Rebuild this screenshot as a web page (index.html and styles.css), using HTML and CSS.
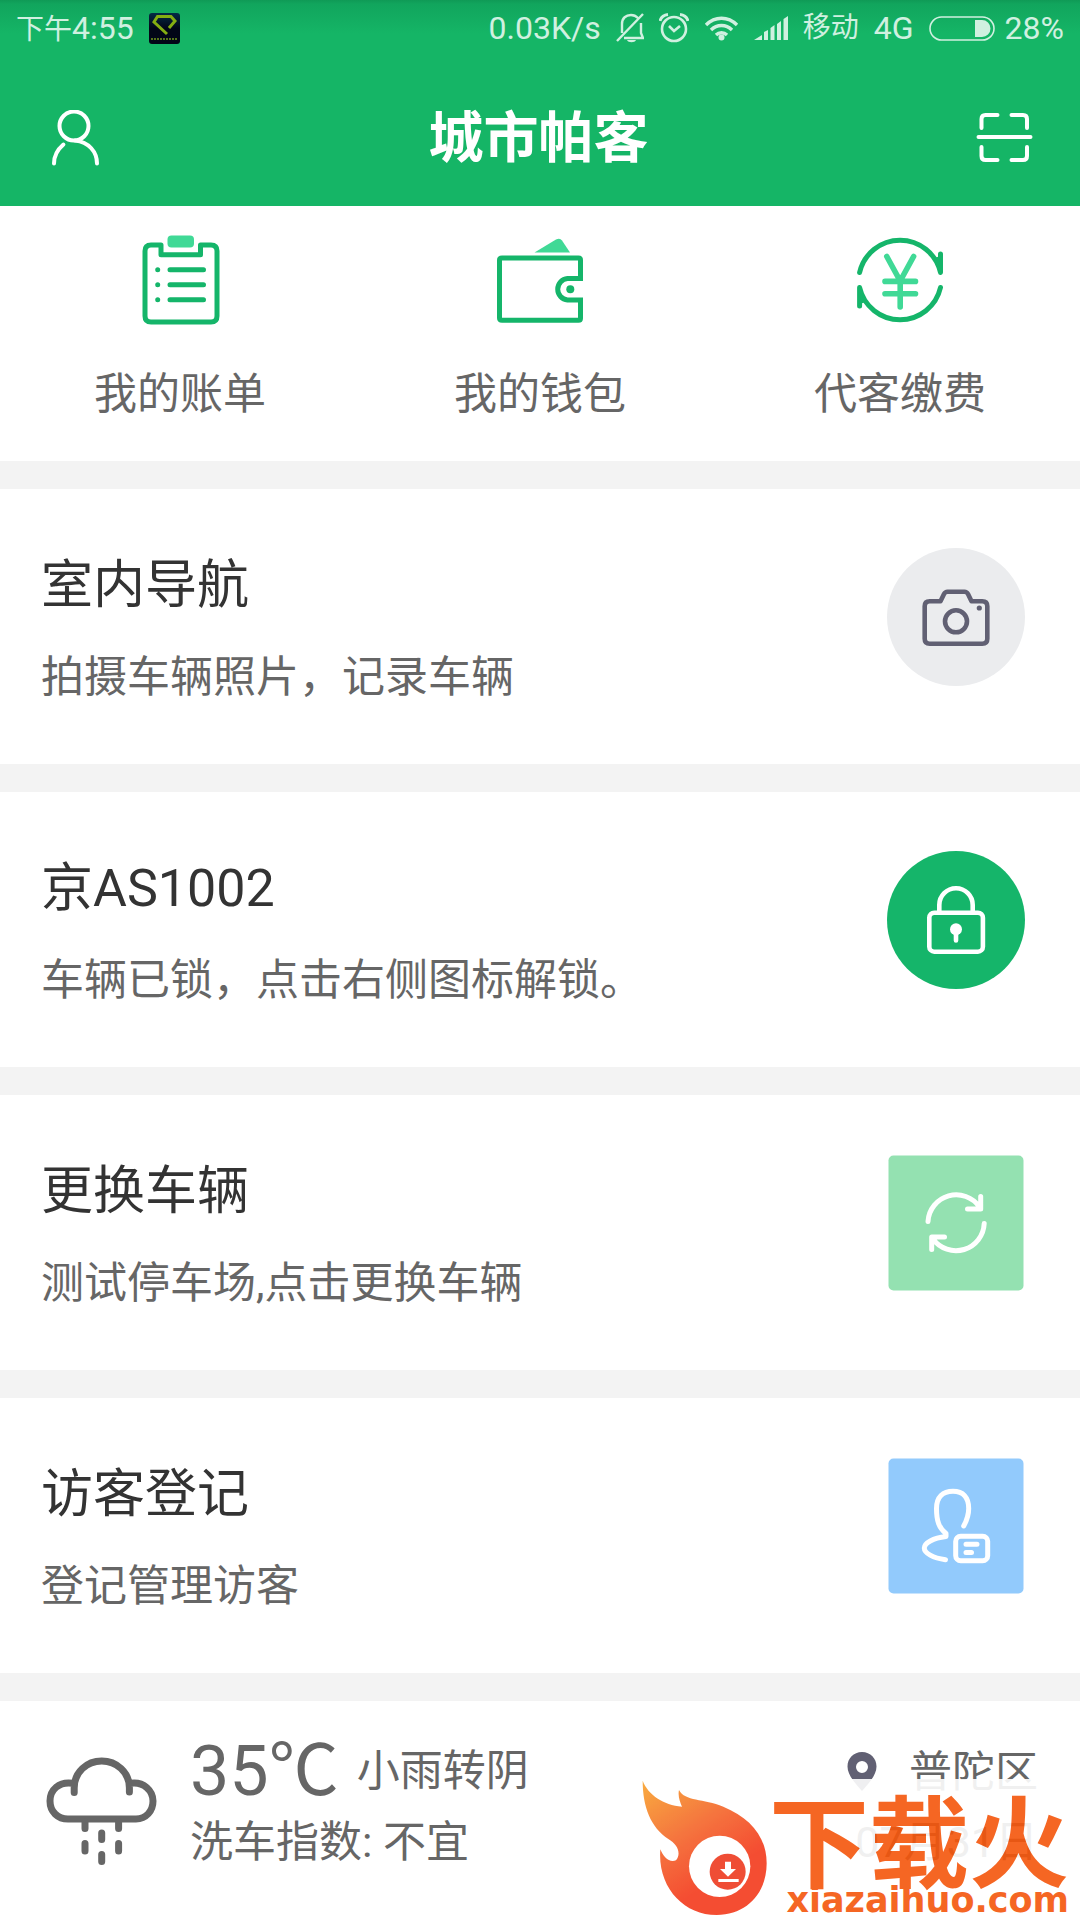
FILE: index.html
```html
<!DOCTYPE html>
<html lang="zh-CN">
<head>
<meta charset="utf-8">
<meta name="viewport" content="width=device-width, initial-scale=1">
<title>城市帕客</title>
<link rel="stylesheet" href="styles.css">
</head>
<body>
<header class="header">
  <div class="status">
    <span class="status-time"><span class="status-cjk">下午</span>4:55</span>
    <svg class="app-icon" width="31" height="31" viewBox="0 0 31 31" aria-hidden="true">
      <defs><linearGradient id="night" x1="0" y1="0" x2="0" y2="1"><stop offset="0" stop-color="#052b45"/><stop offset=".5" stop-color="#020617"/></linearGradient></defs>
      <rect width="31" height="31" rx="3" fill="url(#night)"/>
      <path d="M18 21 5 9 8.500 3.500H22L26 8 20 15" fill="none" stroke="#84ae12" stroke-width="3"/>
      <path d="M2 26H29" stroke="#56741a" stroke-width="2" stroke-dasharray="2 1"/>
    </svg>
    <div class="status-right">
      <span>0.03K/s</span>
      <svg width="28" height="30" viewBox="0 0 28 30" fill="none" stroke="currentColor" stroke-width="2.400" aria-hidden="true">
        <path d="M6 20V11C6 5 10 2 15 2c3 0 5 1 7 3M25 10V20l2 5H8M1 28 27 1"/><path d="M11 27h9c-1 3-8 3-9 0z" fill="currentColor" stroke="none"/>
      </svg>
      <svg width="30" height="30" viewBox="0 0 30 30" fill="none" stroke="currentColor" stroke-width="2.600" aria-hidden="true">
        <circle cx="15" cy="16" r="12"/><path d="M1 8C2 4 5 2 9 1.500M29 8C28 4 25 2 21 1.500" stroke-width="3"/><path d="m10 13 5 5 6-5"/>
      </svg>
      <svg width="35" height="26" viewBox="0 0 35 26" fill="none" stroke="currentColor" stroke-width="4" aria-hidden="true">
        <path d="M2 10C11 1 24 1 33 10M7 15c6-6 15-6 21 0M12 20c3-3 8-3 11 0" stroke-width="3.400"/><circle cx="17.500" cy="22.500" r="3" fill="currentColor" stroke="none"/>
      </svg>
      <svg width="34" height="24" viewBox="0 0 34 24" fill="currentColor" aria-hidden="true">
        <path d="M0 24 8 19V24zM10 16l4-2V24h-4zM16.500 12l4-3V24h-4zM23 8l4-3V24h-4zM29.500 3 34 0V24h-4.500z"/>
      </svg>
      <span class="status-cjk">移动</span>
      <span>4G</span>
      <span class="battery">
        <svg width="66" height="25" viewBox="0 0 66 25" aria-hidden="true">
          <rect x="1" y="1" width="64" height="23" rx="11.500" fill="none" stroke="currentColor" stroke-width="1.600"/>
          <path d="M46 4h7a8.500 8.500 0 0 1 0 17h-7z" fill="currentColor"/>
        </svg>
        <span>28%</span>
      </span>
    </div>
  </div>
  <nav class="nav">
    <button class="icon-button" type="button" aria-label="个人中心">
      <svg width="50" height="56" viewBox="0 0 50 56" fill="none" stroke="currentColor" stroke-width="4" stroke-linecap="round" aria-hidden="true">
        <circle cx="23" cy="16" r="14.500"/><path d="M12.400 34.500C6 40 3 46 3 53.500M24 30.500C38 32 46 42 46 53.500"/>
      </svg>
    </button>
    <h1 class="brand">城市帕客</h1>
    <button class="icon-button" type="button" aria-label="扫一扫">
      <svg width="57" height="52" viewBox="0 0 57 52" fill="none" stroke="currentColor" stroke-width="4" stroke-linecap="round" stroke-linejoin="round" aria-hidden="true">
        <path d="M5.500 16V7q0-4 4-4H21.500M35.500 3H47q4 0 4 4v9M51 35v9q0 4-4 4H35.500M21.500 48H9.500q-4 0-4-4V35M2.500 25H54.500"/>
      </svg>
    </button>
  </nav>
</header>

<main class="main">
  <section class="quick">
    <a class="quick-item" href="#bills">
      <svg width="90" height="90" viewBox="0 0 90 90" fill="none" stroke="#15b56a" stroke-width="5" stroke-linecap="round" stroke-linejoin="round" aria-hidden="true">
        <path d="M26 10H16q-6 0-6 6V81q0 6 6 6H76q6 0 6-6V16q0-6-6-6H65.500V19.700H26z"/>
        <path d="M35 34.700H68.500M35 49.700H68.500M35 64.700H68.500M22.700 34.700h.01M22.700 49.700h.01M22.700 64.700h.01"/>
        <rect x="32.500" y=".5" width="26.500" height="12" rx="4" fill="#40d996" stroke="none"/>
      </svg>
      <span>我的账单</span>
    </a>
    <a class="quick-item" href="#wallet">
      <svg width="90" height="90" viewBox="0 0 90 90" fill="none" stroke="#15b56a" stroke-width="5" aria-hidden="true">
        <path d="M85.500 46V25q0-2-2-2H7q-2.500 0-2.500 2V83q0 2.300 2.500 2.300H83.500q2 0 2-2V62.500M88 43.500H72.500a10.800 10.800 0 0 0 0 21.500H88"/>
        <circle cx="75.300" cy="54.300" r="4" fill="#15b56a" stroke="none"/>
        <path d="M39.500 17.500 61 4.500q4-2 6 1l8 12z" fill="#40d996" stroke="none"/>
      </svg>
      <span>我的钱包</span>
    </a>
    <a class="quick-item" href="#pay">
      <svg width="90" height="90" viewBox="0 0 90 90" fill="none" stroke="#15b56a" stroke-width="5" stroke-linecap="round" stroke-linejoin="round" aria-hidden="true">
        <path d="M4.600 37.500A41.500 41.500 0 0 1 85.500 37.500V19M85.500 52.500A41.500 41.500 0 0 1 4.600 52.500V71"/>
        <path d="M85.500 37.500V22L80 24zM4.600 52.500V68L10 66z" fill="#15b56a" stroke-width="2"/>
        <path d="M31.800 21.500 45.200 46 58.600 21.500M45.200 46V72M30 46.400H60.500M30 58.700H60.500" stroke="#40d996" stroke-width="5.600"/>
      </svg>
      <span>代客缴费</span>
    </a>
  </section>

  <section class="card">
    <div class="card-text"><h2>室内导航</h2><p>拍摄车辆照片，记录车辆</p></div>
    <button class="icon-button" type="button" aria-label="拍照">
      <svg width="138" height="138" viewBox="0 0 138 138" fill="none" stroke="#616073" stroke-width="4.600" stroke-linejoin="round" aria-hidden="true">
        <circle cx="69" cy="69" r="69" fill="#ebecee" stroke="none"/>
        <path d="M53.500 53.300H42.700q-5 0-5 5V90.700q0 5 5 5H95.300q5 0 5-5V58.300q0-5-5-5H84.500L81 46q-1.200-2.300-3.500-2.300H60.500q-2.300 0-3.500 2.300z"/>
        <circle cx="69" cy="73.300" r="11"/><circle cx="92.300" cy="60" r="2.600" fill="#616073" stroke="none"/>
      </svg>
    </button>
  </section>

  <section class="card">
    <div class="card-text"><h2>京AS1002</h2><p>车辆已锁，点击右侧图标解锁。</p></div>
    <button class="icon-button" type="button" aria-label="解锁">
      <svg width="138" height="138" viewBox="0 0 138 138" fill="none" stroke="#fff" stroke-width="4.600" stroke-linecap="round" aria-hidden="true">
        <circle cx="69" cy="69" r="69" fill="#15b56a" stroke="none"/>
        <rect x="42.300" y="61.700" width="53.600" height="39" rx="5"/>
        <path d="M52.300 61V54a16.700 16.700 0 0 1 33.400 0v7M69 80V89.500"/>
        <circle cx="69" cy="78.300" r="6" fill="#fff" stroke="none"/>
      </svg>
    </button>
  </section>

  <section class="card">
    <div class="card-text"><h2>更换车辆</h2><p>测试停车场,点击更换车辆</p></div>
    <button class="icon-button" type="button" aria-label="更换车辆">
      <svg width="138" height="138" viewBox="0 0 138 138" fill="none" stroke="#fff" stroke-width="5" stroke-linecap="round" stroke-linejoin="round" aria-hidden="true">
        <rect x="1.500" y="1.500" width="135" height="135" rx="5" fill="#94e1b1" stroke="none"/>
        <path d="M41 67.500A28.300 28.300 0 0 1 92.500 53M93.700 42.500V55H80.500M97.200 69.500A28.300 28.300 0 0 1 46 85M44.700 95.500V83H57.500"/>
      </svg>
    </button>
  </section>

  <section class="card">
    <div class="card-text"><h2>访客登记</h2><p>登记管理访客</p></div>
    <button class="icon-button" type="button" aria-label="访客登记">
      <svg width="138" height="138" viewBox="0 0 138 138" fill="none" stroke="#fff" stroke-width="5" stroke-linecap="round" stroke-linejoin="round" aria-hidden="true">
        <rect x="1.500" y="1.500" width="135" height="135" rx="5" fill="#92cafc" stroke="none"/>
        <path d="M76.700 69C80 63 81.700 58 81.700 51.500 81.700 40 76 34.300 66 34.300S49.500 40 49.500 51.500C49.500 64 52 71 59 76.500V79.500C46 81 37.300 86 37.300 91S46 101 58.500 102.700"/>
        <rect x="68.700" y="79.200" width="32" height="24.500" rx="5"/>
        <path d="M79 87.300H90M79 95.500H84.500"/>
      </svg>
    </button>
  </section>

  <section class="weather">
    <svg class="cloud" width="112" height="110" viewBox="0 0 112 110" fill="none" stroke="#666" stroke-width="7" stroke-linecap="round" aria-hidden="true">
      <path d="M28.200 36.500V32C28.200 16 41 5 55.700 5S83.400 16 83.400 32v4M27 27.300C13 25 4 34 4 45S12 63 22 63H90c10 0 17-8 17-18S98 25 84 27.300"/>
      <path d="M39 66v6.500M72.600 66v6.500M39 87.500v7.500M72.600 87.500v7.500M55.700 77v6.500M55.700 98.500v7"/>
    </svg>
    <div class="forecast">
      <p class="now"><span class="temp">35℃</span><span>小雨转阴</span></p>
      <p>洗车指数: 不宜</p>
    </div>
    <div class="place">
      <p class="district">
        <svg width="30" height="40" viewBox="0 0 30 40" aria-hidden="true"><path fill="#616073" fill-rule="evenodd" d="M15 0C6.500 0 .5 6.500.5 14.500.5 23 8 31 15 39 22 31 29.500 23 29.500 14.500 29.500 6.500 23.500 0 15 0zM15 9a6 6 0 1 1 0 12 6 6 0 0 1 0-12z"/></svg>
        <span>普陀区</span>
      </p>
      <p>07月31日</p>
    </div>
    <div class="watermark">
      <svg width="132" height="137" viewBox="51 267 396 411" aria-hidden="true">
        <defs><linearGradient id="flame" x1="0" y1="0" x2=".6" y2="1"><stop offset="0" stop-color="#f9a32c"/><stop offset=".45" stop-color="#f4642a"/><stop offset=".8" stop-color="#f33a1c"/></linearGradient></defs>
        <path fill="url(#flame)" d="M68 272C85 315 130 345 186 350 180 335 173 318 177 300 195 335 250 325 310 350 390 383 440 440 440 520 440 610 380 675 290 675 190 675 112 590 121 478 130 500 148 520 168 511 185 490 172 462 145 447 92 412 68 350 68 272z"/>
        <circle cx="299" cy="529" r="92" fill="#fff"/>
        <circle cx="323" cy="545" r="54" fill="#ee3a20"/>
        <path d="M315 515h18v22h15l-24 23-24-23h15zM295 567h61v9h-61z" fill="#fff"/>
      </svg>
      <p class="watermark-text"><strong>下载火</strong><span>xiazaihuo.com</span></p>
    </div>
  </section>
</main>
</body>
</html>
```
FILE: styles.css
```css
* {
  box-sizing: border-box;
}

body {
  margin: 0;
  background: #f3f3f3;
  color: #666;
  font-family: Roboto, "Noto Sans CJK SC", sans-serif;
  font-size: 43px;
  line-height: 60px;
}

h1, h2, p {
  margin: 0;
  font-weight: 400;
}

svg {
  display: block;
  flex: none;
}

.icon-button {
  flex: none;
  padding: 0;
  border: 0;
  background: none;
  color: inherit;
}

.header {
  background: linear-gradient(#0f9a56, #11a55d 4px, #15b566 34px);
  color: #fff;
}

.status {
  display: flex;
  align-items: center;
  gap: 15px;
  padding: 0 16px;
  color: #d0f0e0;
  font-size: 32px;
  line-height: 56px;
}

.status-cjk {
  font-size: 28px;
  line-height: 40px;
}

.status-right {
  display: flex;
  align-items: center;
  gap: 15px;
  margin-left: auto;
}

.battery {
  display: flex;
  align-items: center;
  gap: 10px;
}

.nav {
  display: flex;
  align-items: center;
  justify-content: space-between;
  padding: 40px 47px 26px 51px;
}

.brand {
  font-size: 55px;
  font-weight: 700;
  line-height: 84px;
}

.main {
  display: flex;
  flex-direction: column;
  gap: 28px;
}

.quick {
  display: grid;
  grid-template-columns: repeat(3, 1fr);
  padding: 29px 0 37px;
  background: #fff;
}

.quick-item {
  display: flex;
  flex-direction: column;
  align-items: center;
  gap: 39px;
  color: inherit;
  text-decoration: none;
}

.card {
  display: flex;
  align-items: flex-start;
  justify-content: space-between;
  padding: 59px 55px 57px 41px;
  background: #fff;
}

.card-text {
  display: flex;
  flex-direction: column;
  gap: 26px;
  padding-top: 3px;
}

.card-text h2 {
  color: #333;
  font-size: 52px;
  line-height: 70px;
}

.weather {
  position: relative;
  display: flex;
  align-items: flex-end;
  padding: 29px 42px 48px 46px;
  background: #fff;
}

.cloud {
  margin-bottom: 6px;
}

.forecast {
  margin-left: 32px;
}

.now {
  display: flex;
  align-items: center;
  gap: 18px;
}

.temp {
  font-size: 70px;
  line-height: 82px;
}

.place {
  display: flex;
  flex-direction: column;
  align-items: flex-end;
  gap: 10px;
  margin-left: auto;
}

.district {
  display: flex;
  align-items: center;
  gap: 32px;
}

.watermark {
  position: absolute;
  right: 0;
  bottom: 0;
  display: flex;
  padding-right: 11px;
  background: #fff;
  opacity: 0.9;
}

.watermark-text {
  display: flex;
  flex-direction: column;
  align-items: flex-end;
  padding-top: 33px;
  color: #f5560c;
}

.watermark-text strong {
  font-size: 100px;
  font-weight: 700;
  line-height: 68px;
}

.watermark-text span {
  font-family: "DejaVu Sans", sans-serif;
  font-size: 35px;
  font-weight: 700;
  line-height: 40px;
}
```
